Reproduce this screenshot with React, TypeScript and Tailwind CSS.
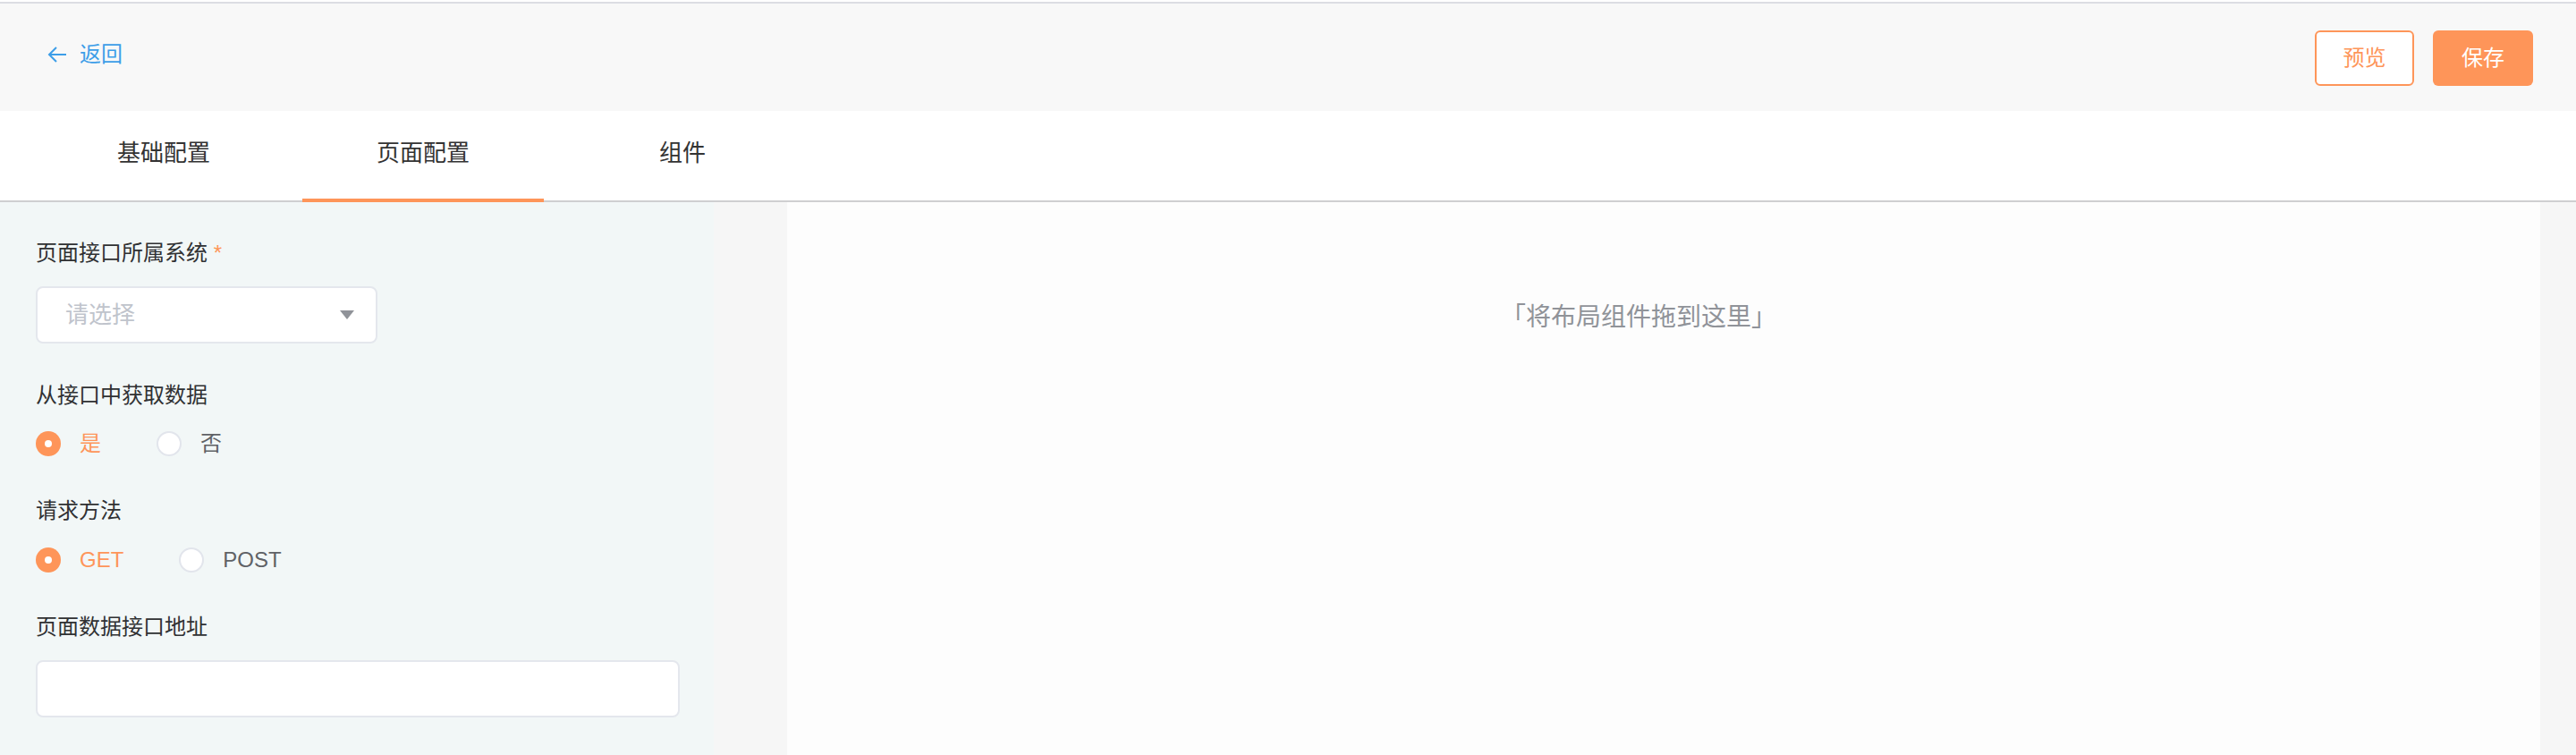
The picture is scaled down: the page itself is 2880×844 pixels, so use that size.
import { useState } from "react"

const tabs = ["基础配置", "页面配置", "组件"]

function BackArrow() {
  return (
    <svg width="22" height="20" viewBox="0 0 22 20" fill="none" stroke="currentColor" strokeWidth="2">
      <path d="M21 10H2" />
      <path d="M10 2L2 10l8 8" />
    </svg>
  )
}

function Radio({ label, checked, onClick }: { label: string; checked: boolean; onClick: () => void }) {
  return (
    <button onClick={onClick} className="flex items-center mr-[62px] h-[28px]">
      {checked ? (
        <span className="w-[28px] h-[28px] rounded-full bg-[#fe9559] flex items-center justify-center">
          <span className="w-[8px] h-[8px] rounded-full bg-white" />
        </span>
      ) : (
        <span className="w-[28px] h-[28px] rounded-full bg-white border-2 border-[#e2e5ec]" />
      )}
      <span className={`ml-[21px] text-[24px] leading-[28px] ${checked ? "text-[#fe9559]" : "text-[#606266]"}`}>
        {label}
      </span>
    </button>
  )
}

export default function App() {
  const [tab, setTab] = useState(1)
  const [fetchData, setFetchData] = useState(true)
  const [method, setMethod] = useState("GET")

  return (
    <div
      className="h-screen flex flex-col bg-white overflow-hidden"
      style={{ fontFamily: '"Liberation Sans", "Noto Sans CJK SC", sans-serif' }}
    >
      {/* header */}
      <div className="mt-[2px] border-t-2 border-[#dcdde3] bg-[#f8f8f8] h-[122px] flex items-center justify-between pl-[53px] pr-[48px]">
        <a href="#" className="flex items-center text-[#3d9ee8] -mt-[6px]">
          <BackArrow />
          <span className="ml-[14px] text-[24px] leading-[24px]">返回</span>
        </a>
        <div className="flex items-center gap-[21px] mt-[2px]">
          <button className="w-[111px] h-[62px] rounded-[6px] border-2 border-[#fe9559] bg-white text-[#fe9559] text-[24px]">
            预览
          </button>
          <button className="w-[112px] h-[62px] rounded-[6px] bg-[#fe9559] text-white text-[24px]">保存</button>
        </div>
      </div>

      {/* tabs */}
      <div className="h-[102px] border-b-2 border-[#cfcfd1] flex pl-[48px] gap-[20px]">
        {tabs.map((t, i) => (
          <button
            key={t}
            onClick={() => setTab(i)}
            className={`w-[270px] h-[102px] -mb-[2px] flex items-center justify-center pb-[4px] text-[26px] text-[#333333] border-b-4 ${
              tab === i ? "border-[#fe9559]" : "border-transparent"
            }`}
          >
            {t}
          </button>
        ))}
      </div>

      {/* body */}
      <div className="flex-1 flex bg-[#f6f6f6]">
        <div className="w-[798px] bg-[#f2f7f7] pl-[40px] pr-[38px] pt-[45px]">
          <div className="text-[24px] leading-[24px] text-[#303133]">
            页面接口所属系统 <span className="text-[#fe9559]">*</span>
          </div>
          <div className="mt-[25px] w-[382px] h-[64px] rounded-[8px] border-2 border-[#e4e7ed] bg-white flex items-center justify-between pl-[31px] pr-[24px]">
            <span className="text-[26px] text-[#c0c4cc]">请选择</span>
            <svg width="16" height="10" viewBox="0 0 16 10">
              <path d="M0 0h16L8 10z" fill="#909399" />
            </svg>
          </div>

          <div className="mt-[46px] text-[24px] leading-[24px] text-[#303133]">从接口中获取数据</div>
          <div className="mt-[28px] flex">
            <Radio label="是" checked={fetchData} onClick={() => setFetchData(true)} />
            <Radio label="否" checked={!fetchData} onClick={() => setFetchData(false)} />
          </div>

          <div className="mt-[49px] text-[24px] leading-[24px] text-[#303133]">请求方法</div>
          <div className="mt-[29px] flex">
            <Radio label="GET" checked={method === "GET"} onClick={() => setMethod("GET")} />
            <Radio label="POST" checked={method === "POST"} onClick={() => setMethod("POST")} />
          </div>

          <div className="mt-[49px] text-[24px] leading-[24px] text-[#303133]">页面数据接口地址</div>
          <input className="mt-[25px] w-[720px] h-[64px] rounded-[8px] border-2 border-[#e4e7ed] bg-white outline-none px-[30px] text-[24px]" />
        </div>

        <div className="flex-1 ml-[82px] mr-[40px] bg-[#fdfdfd] flex justify-center pr-[56px] pt-[112px]">
          <span
            className="text-[28px] leading-[28px] h-[28px] text-[#909399]"
            style={{ fontFamily: '"Noto Sans CJK SC", sans-serif' }}
          >
            「将布局组件拖到这里」
          </span>
        </div>
      </div>
    </div>
  )
}
